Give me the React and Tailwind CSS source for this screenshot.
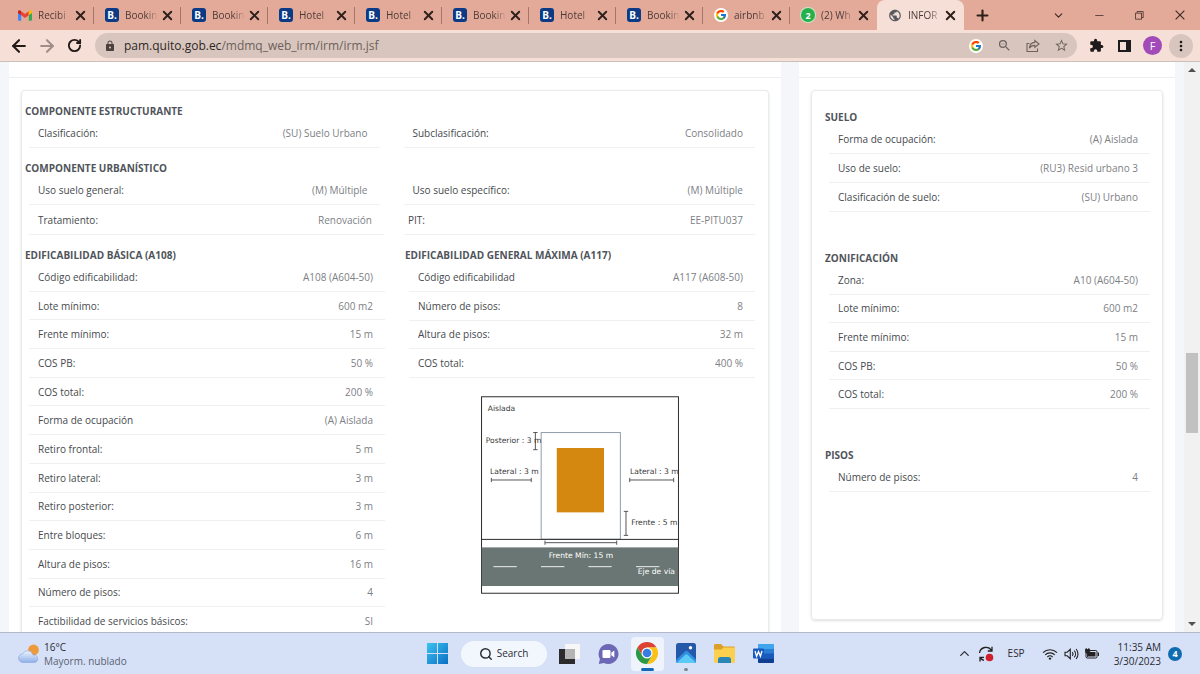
import React from 'react';
import { MdLock, MdZoomOut, MdStarBorder, MdExtension, MdMoreVert, MdPublic } from 'react-icons/md';
import { FcGoogle } from 'react-icons/fc';
import { VscChromeClose, VscChromeMinimize, VscChromeRestore } from 'react-icons/vsc';
import { ArrowLeft, ArrowRight, ChevronDown, ChevronUp, Plus, RotateCw, Search, X } from 'lucide-react';

/* ---------- Browser icons ---------- */

function GmailIcon() {
  return (
    <svg viewBox="0 0 24 18" className="h-[11px] w-[14px]" aria-hidden="true">
      <path d="M0 3v13.400C0 17.300.7 18 1.600 18H5.500V8z" fill="#4285f4" />
      <path d="M24 3v13.400c0 .9-.7 1.600-1.600 1.600H18.500V8z" fill="#34a853" />
      <path d="M5.500 1.700v6.800L12 13.400l6.500-4.900V1.700L12 6.600z" fill="#ea4335" />
      <path d="M0 2.500v2l5.500 4.100V1.700L4 .5C2.300-.7 0 .4 0 2.500z" fill="#c5221f" />
      <path d="M24 2.500v2l-5.500 4.100V1.700L20 .5c1.700-1.200 4-.1 4 2z" fill="#fbbc04" />
    </svg>
  );
}

function BookingIcon() {
  return (
    <span className="flex size-[14px] items-center justify-center rounded-[3px] bg-[#0b3b86] text-[10px] leading-none font-bold text-white">
      B.
    </span>
  );
}

function GoogleIcon() {
  return (
    <span className="flex size-[14px] items-center justify-center rounded-full bg-white">
      <FcGoogle className="size-[12px]" />
    </span>
  );
}

function WhatsAppIcon() {
  return (
    <span className="flex size-[14px] items-center justify-center rounded-full bg-[#25b04b] text-[9px] leading-none font-bold text-white ring-1 ring-[#c9e6c9]">
      2
    </span>
  );
}

function ShareIcon() {
  return (
    <svg viewBox="0 0 14 14" className="size-[14px]" fill="none" stroke="#6f635f" strokeWidth="1.100" aria-hidden="true">
      <path d="M3.500 4.500H1V12.500H11.500V9.500" />
      <path d="M8.800 1.500 13 5 8.800 8.300V6.400C6.200 6.400 4.500 7.300 3.300 9.300 3.600 6 5.300 3.700 8.800 3.400z" />
    </svg>
  );
}

function SidePanelIcon() {
  return (
    <svg viewBox="0 0 13 12" className="h-[12px] w-[13px]" aria-hidden="true">
      <rect x="1" y="1" width="11" height="10" fill="none" stroke="#1d1b1b" strokeWidth="2" />
      <rect x="8" y="1" width="4" height="10" fill="#1d1b1b" />
    </svg>
  );
}

/* ---------- Taskbar icons ---------- */

function WindowsIcon() {
  return (
    <svg viewBox="0 0 21 21" className="size-[21px]" aria-hidden="true">
      <defs>
        <linearGradient id="win" x1="0" y1="0" x2="1" y2="1">
          <stop offset="0" stopColor="#3cc3f0" />
          <stop offset="1" stopColor="#0a6fc4" />
        </linearGradient>
      </defs>
      <path d="M0 0h10v10H0zM11 0h10v10H11zM0 11h10v10H0zM11 11h10v10H11z" fill="url(#win)" />
    </svg>
  );
}

function TaskViewIcon() {
  return (
    <svg viewBox="0 0 21 20" className="h-[20px] w-[21px]" aria-hidden="true">
      <rect x="6" y="0" width="15" height="15" fill="#f7f7f7" />
      <rect x="0" y="5" width="16" height="15" fill="#2b2b2b" />
      <rect x="6" y="5" width="10" height="10" fill="#b4b4b4" />
    </svg>
  );
}

function ChatIcon() {
  return (
    <svg viewBox="0 0 21 20" className="h-[20px] w-[21px]" aria-hidden="true">
      <path d="M10.500 0a10 10 0 1 1-4.600 18.900L.8 20l1.100-5A10 10 0 0 1 10.500 0z" fill="#6c68b5" />
      <rect x="4.500" y="6" width="8" height="8" rx="1.300" fill="#fff" />
      <path d="M13.300 8.800 16.300 6.500v7L13.300 11.200z" fill="#fff" />
    </svg>
  );
}

function ChromeIcon() {
  return (
    <svg viewBox="0 0 48 48" className="size-[22px]" aria-hidden="true">
      <path d="M3.200 12A24 24 0 0 1 44.800 12H24L13.600 30z" fill="#dd4132" />
      <path d="M44.800 12A24 24 0 0 1 24 48L34.400 30 24 12z" fill="#fbc116" />
      <path d="M24 48A24 24 0 0 1 3.200 12L13.600 30H34.400z" fill="#2a9a48" />
      <circle cx="24" cy="24" r="12" fill="#fff" />
      <circle cx="24" cy="24" r="9.500" fill="#3a7de0" />
    </svg>
  );
}

function PhotosIcon() {
  return (
    <svg viewBox="0 0 20 20" className="size-[20px]" aria-hidden="true">
      <rect width="20" height="20" rx="2.500" fill="#2458a8" />
      <path d="M0 17 9 8.500c1-.9 2-.9 3 0l8 8V18a2 2 0 0 1-2 2H2a2 2 0 0 1-2-2z" fill="#2f8fe0" />
      <path d="M1 19.500 9 12c.9-.9 2-.9 2.900 0l7.600 7.300L18 20H2z" fill="#5cc9f7" />
      <circle cx="14.500" cy="4.800" r="1.700" fill="#fff" />
    </svg>
  );
}

function FolderIcon() {
  return (
    <svg viewBox="0 0 21 19" className="h-[19px] w-[21px]" aria-hidden="true">
      <path d="M0 1.500C0 .7.6 0 1.500 0H7l2.500 2.500H19.500c.8 0 1.500.7 1.500 1.500V8H0z" fill="#dca02a" />
      <path d="M0 5.500h7.500l2-2H21V17.500c0 .8-.7 1.500-1.500 1.500h-18C.7 19 0 18.300 0 17.500z" fill="#fbd04f" />
      <path d="M4 19v-3.500C4 14 5 13 6.500 13h8c1.500 0 2.500 1 2.500 2.500V19z" fill="#2b86b8" />
    </svg>
  );
}

function WordIcon() {
  return (
    <svg viewBox="0 0 21 19" className="h-[19px] w-[21px]" aria-hidden="true">
      <rect x="5" y="0" width="16" height="19" rx="1.500" fill="#2b7cd3" />
      <rect x="5" y="0" width="16" height="5" rx="1.500" fill="#41a5ee" />
      <rect x="5" y="9.500" width="16" height="5" fill="#185abd" />
      <path d="M5 14.500H21V17.500a1.500 1.500 0 0 1-1.500 1.500h-13A1.500 1.500 0 0 1 5 17.500z" fill="#103f91" />
      <rect x="0" y="4.500" width="11" height="10" rx="1" fill="#185abd" />
      <path d="M2 7 3.600 12.200 5.500 7.500 7.400 12.200 9 7" fill="none" stroke="#fff" strokeWidth="1.300" />
    </svg>
  );
}

function WeatherIcon() {
  return (
    <svg viewBox="0 0 22 19" className="h-[19px] w-[22px]" aria-hidden="true">
      <defs>
        <linearGradient id="cloud" x1="0" y1="0" x2="0" y2="1">
          <stop offset="0" stopColor="#eef4ff" />
          <stop offset="1" stopColor="#8fb0e8" />
        </linearGradient>
      </defs>
      <circle cx="15.500" cy="6" r="5.400" fill="#ee9a3c" />
      <path d="M5 18.500a4.300 4.300 0 0 1-.3-8.600A5.500 5.500 0 0 1 15 11a3.800 3.800 0 1 1 1.500 7.500z" fill="url(#cloud)" stroke="#86a5dc" strokeWidth=".6" />
    </svg>
  );
}

function SyncIcon() {
  return (
    <svg viewBox="0 0 16 16" className="size-[16px]" fill="none" stroke="#222" strokeWidth="1.300" aria-hidden="true">
      <path d="M1.500 7A6.500 6.500 0 0 1 13.500 4.500M14 .8V5H9.800" />
      <path d="M2 15.500V11.300H6M2.500 12A6.500 6.500 0 0 0 6 14.400" />
      <circle cx="11.500" cy="11.500" r="3.800" fill="#cf1f2b" stroke="none" />
    </svg>
  );
}

function WifiIcon() {
  return (
    <svg viewBox="0 0 16 12" className="h-[12px] w-[16px]" fill="none" stroke="#222" strokeWidth="1.200" aria-hidden="true">
      <path d="M1 4.600a10 10 0 0 1 14 0M3.200 6.900a6.800 6.800 0 0 1 9.600 0M5.400 9a3.700 3.700 0 0 1 5.200 0" />
      <circle cx="8" cy="10.600" r="1.200" fill="#222" stroke="none" />
    </svg>
  );
}

function VolumeIcon() {
  return (
    <svg viewBox="0 0 15 12" className="h-[12px] w-[15px]" fill="none" stroke="#222" strokeWidth="1.100" aria-hidden="true">
      <path d="M1 4.200H3.200L6.300 1.300V10.700L3.200 7.800H1z" />
      <path d="M8.300 4.200a2.800 2.800 0 0 1 0 3.600M10.200 2.600a5 5 0 0 1 0 6.800M12.100 1a7.500 7.500 0 0 1 0 10" />
    </svg>
  );
}

function BatteryIcon() {
  return (
    <svg viewBox="0 0 14 12" className="h-[12px] w-[14px]" aria-hidden="true">
      <rect x="1" y="2.500" width="11" height="7.500" rx="1.200" fill="none" stroke="#222" />
      <rect x="2.500" y="4" width="8" height="4.500" fill="#222" />
      <rect x="12.800" y="4.500" width="1.200" height="3.500" fill="#222" />
      <path d="M1.200 0v2M3.800 0v2M.3 1.500h4.400v2.200L2.500 6 .3 3.700zM2.500 6v3" fill="#222" stroke="#222" strokeWidth=".9" />
    </svg>
  );
}

/* ---------- Browser chrome ---------- */

const tabs = [
  { icon: GmailIcon, title: 'Recibi' },
  { icon: BookingIcon, title: 'Bookin' },
  { icon: BookingIcon, title: 'Bookin' },
  { icon: BookingIcon, title: 'Hotel' },
  { icon: BookingIcon, title: 'Hotel' },
  { icon: BookingIcon, title: 'Bookin' },
  { icon: BookingIcon, title: 'Hotel' },
  { icon: BookingIcon, title: 'Bookin' },
  { icon: GoogleIcon, title: 'airbnb' },
  { icon: WhatsAppIcon, title: '(2) Wh' },
];

function TabContent({ icon: Icon, title }) {
  return (
    <>
      <span className="flex w-[14px] shrink-0 justify-center">
        <Icon />
      </span>
      <span className="ml-[6px] w-[35px] text-[10px] whitespace-nowrap text-[#4c3a36] [mask-image:linear-gradient(to_right,black_60%,transparent_95%)]">
        {title}
      </span>
      <button type="button" aria-label={`Cerrar ${title}`} className="flex shrink-0 text-[#2d1f1c]">
        <X className="size-[15px]" strokeWidth={3} />
      </button>
    </>
  );
}

function GlobeIcon() {
  return <MdPublic className="size-[15px] text-[#55585c]" />;
}

function TabStrip() {
  return (
    <header className="flex h-[30px] shrink-0 items-center bg-[#e3aa99] pl-[7px]">
      <div className="flex h-full items-center">
        {tabs.map((tab, i) => (
          <div
            key={i}
            className={`flex h-[17px] w-[87px] items-center border-r pl-[11px] ${
              i === tabs.length - 1 ? 'border-transparent' : 'border-[#a5776a]'
            }`}
          >
            <TabContent {...tab} />
          </div>
        ))}
        <div className="flex h-full w-[87px] items-center self-end rounded-t-lg bg-[#f6dfd7] pl-[11px]">
          <TabContent icon={GlobeIcon} title="INFOR" />
        </div>
      </div>
      <button type="button" aria-label="Nueva pestaña" className="ml-[10px] flex text-[#2d1f1c]">
        <Plus className="size-[17px]" strokeWidth={3} />
      </button>
      <div className="ml-auto flex items-center gap-7 pr-[13px] text-[#3a2723]">
        <button type="button" aria-label="Buscar pestañas">
          <ChevronDown className="size-[13px]" strokeWidth={2} />
        </button>
        <button type="button" aria-label="Minimizar">
          <VscChromeMinimize className="size-3" />
        </button>
        <button type="button" aria-label="Restaurar">
          <VscChromeRestore className="size-3" />
        </button>
        <button type="button" aria-label="Cerrar">
          <VscChromeClose className="size-[14px]" />
        </button>
      </div>
    </header>
  );
}

function Toolbar() {
  return (
    <div className="flex h-8 shrink-0 items-center border-b border-[#cdbfba] bg-[#f6dfd7] pl-[9px] pr-[7px]">
      <div className="flex items-center gap-2 text-[#231a18]">
        <button type="button" aria-label="Atrás">
          <ArrowLeft className="size-5" strokeWidth={2.5} />
        </button>
        <button type="button" aria-label="Adelante" className="text-[#a08d87]">
          <ArrowRight className="size-5" strokeWidth={2.5} />
        </button>
        <button type="button" aria-label="Recargar" className="ml-[2px]">
          <RotateCw className="size-[15px]" strokeWidth={3} />
        </button>
      </div>
      <div className="ml-[13px] flex h-[25px] flex-1 items-center rounded-full bg-[#d8c6be] pr-2 pl-[9px]">
        <MdLock className="size-3 text-[#4c403d]" />
        <p className="ml-2 flex-1 text-[12px] text-[#6d5f5a]">
          <span className="text-[#2f2725]">pam.quito.gob.ec</span>/mdmq_web_irm/irm/irm.jsf
        </p>
        <div className="flex items-center gap-[14px] text-[#6f635f]">
          <button type="button" aria-label="Google">
            <GoogleIcon />
          </button>
          <button type="button" aria-label="Reducir zoom">
            <MdZoomOut className="size-[15px]" />
          </button>
          <button type="button" aria-label="Compartir">
            <ShareIcon />
          </button>
          <button type="button" aria-label="Agregar a favoritos">
            <MdStarBorder className="size-[15px]" />
          </button>
        </div>
      </div>
      <div className="ml-3 flex items-center text-[#1d1b1b]">
        <button type="button" aria-label="Extensiones">
          <MdExtension className="size-[15px]" />
        </button>
        <button type="button" aria-label="Panel lateral" className="ml-[14px]">
          <SidePanelIcon />
        </button>
        <button
          type="button"
          aria-label="Perfil"
          className="ml-3 flex size-[19px] items-center justify-center rounded-full bg-[#a14ab8] text-[11px] leading-none text-white"
        >
          F
        </button>
        <button
          type="button"
          aria-label="Menú"
          className="ml-[7px] flex size-6 items-center justify-center rounded-full bg-[#d8c6be]"
        >
          <MdMoreVert className="size-4" />
        </button>
      </div>
    </div>
  );
}

/* ---------- Page content ---------- */

const basica = [
  ['Código edificabilidad:', 'A108 (A604-50)'],
  ['Lote mínimo:', '600 m2'],
  ['Frente mínimo:', '15 m'],
  ['COS PB:', '50 %'],
  ['COS total:', '200 %'],
  ['Forma de ocupación', '(A) Aislada'],
  ['Retiro frontal:', '5 m'],
  ['Retiro lateral:', '3 m'],
  ['Retiro posterior:', '3 m'],
  ['Entre bloques:', '6 m'],
  ['Altura de pisos:', '16 m'],
  ['Número de pisos:', '4'],
  ['Factibilidad de servicios básicos:', 'SI'],
];

const maxima = [
  ['Código edificabilidad', 'A117 (A608-50)'],
  ['Número de pisos:', '8'],
  ['Altura de pisos:', '32 m'],
  ['COS total:', '400 %'],
];

const suelo = [
  ['Forma de ocupación:', '(A) Aislada'],
  ['Uso de suelo:', '(RU3) Resid urbano 3'],
  ['Clasificación de suelo:', '(SU) Urbano'],
];

const zonificacion = [
  ['Zona:', 'A10 (A604-50)'],
  ['Lote mínimo:', '600 m2'],
  ['Frente mínimo:', '15 m'],
  ['COS PB:', '50 %'],
  ['COS total:', '200 %'],
];

function Heading({ children, className = 'pt-3' }) {
  return <h2 className={`${className} text-[10px] leading-4 font-bold text-[#50545a]`}>{children}</h2>;
}

function Field({ label, value, className = 'pl-[9px] pr-3' }) {
  return (
    <div className={`flex min-h-7 items-center justify-between border-b border-[#f0f0f2] leading-4 ${className}`}>
      <dt className="text-[#46494e]">{label}</dt>
      <dd className="text-[#7d8085]">{value}</dd>
    </div>
  );
}

function SetbackDiagram() {
  return (
    <svg
      viewBox="0 0 260 260"
      className="mx-auto mt-[18px] size-[198px]"
      role="img"
      aria-label="Esquema de retiros"
      fontFamily="DejaVu Sans, sans-serif"
      fontSize="10"
      fill="#3a3a3a"
    >
      <rect x="0.700" y="1" width="258.600" height="258" fill="#fff" stroke="#2b2b2b" strokeWidth="1.300" />
      <rect x="79" y="48" width="104" height="140" fill="none" stroke="#8f9cab" strokeWidth="1.300" />
      <rect x="99.500" y="68.300" width="62" height="84.500" fill="#d4880f" />
      <path d="M0 188.300H260" stroke="#2b2b2b" strokeWidth="1.300" />
      <rect x="1" y="198.800" width="258" height="50.700" fill="#6a7673" />
      <g fill="none" stroke="#555" strokeWidth="1.300">
        <path d="M71.400 48V70.500M68.500 48h5.800M68.500 70.500h5.800" />
        <path d="M13.600 110.300H66M13.600 107.500v5.600M66 107.500v5.600" />
        <path d="M195.300 110.300H253M195.300 107.500v5.600M253 107.500v5.600" />
        <path d="M190.400 151.500V183M187.500 151.500h5.800M187.500 183h5.800" />
        <path d="M84 192.600H178.200M84 189.800v5.600M178.200 189.800v5.600" />
      </g>
      <path
        d="M16.200 224.100H47M78.800 224.100H109.500M141 224.100H171.600M203.600 224.100H234.200"
        stroke="#eef0ef"
        strokeWidth="1.300"
      />
      <text x="8.800" y="19.500">Aislada</text>
      <text x="6.200" y="62">Posterior : 3 m</text>
      <text x="11.900" y="102.500">Lateral : 3 m</text>
      <text x="195.700" y="102.500">Lateral : 3 m</text>
      <text x="197.400" y="169.400">Frente : 5 m</text>
      <text x="88.900" y="213" fill="#fff">Frente Mín: 15 m</text>
      <text x="205.800" y="234.200" fill="#fff">Eje de vía</text>
    </svg>
  );
}

function Report() {
  return (
    <main className="flex flex-col overflow-hidden bg-white">
      <div className="h-4 shrink-0 border-b border-[#eceef1]" />
      <section className="mx-3 mt-3 flex-1 rounded-t border border-b-0 border-[#e9eaec] px-[3px] pt-3 shadow-sm">
        <div className="pr-[10px]">
          <Heading className="">COMPONENTE ESTRUCTURANTE</Heading>
          <dl className="grid auto-rows-[29px] grid-cols-[351fr_352fr] gap-x-6 pl-1">
            <Field label="Clasificación:" value="(SU) Suelo Urbano" />
            <Field label="Subclasificación:" value="Consolidado" />
          </dl>
          <Heading>COMPONENTE URBANÍSTICO</Heading>
          <dl className="grid auto-rows-[29px] grid-cols-[351fr_352fr] gap-x-6 pl-1">
            <Field label="Uso suelo general:" value="(M) Múltiple" />
            <Field label="Uso suelo específico:" value="(M) Múltiple" />
          </dl>
          <dl className="grid auto-rows-[30px] grid-cols-[356fr_352fr] gap-x-5 pl-1">
            <Field label="Tratamiento:" value="Renovación" />
            <Field label="PIT:" value="EE-PITU037" className="pl-1 pr-3" />
          </dl>
          <div className="grid grid-cols-[361fr_351fr] gap-x-5">
            <div>
              <Heading>EDIFICABILIDAD BÁSICA (A108)</Heading>
              <dl className="grid min-h-[373px] auto-rows-fr pl-1">
                {basica.map(([label, value]) => (
                  <Field key={label} label={label} value={value} />
                ))}
              </dl>
            </div>
            <div>
              <Heading>EDIFICABILIDAD GENERAL MÁXIMA (A117)</Heading>
              <dl className="grid min-h-[115px] auto-rows-fr pl-1">
                {maxima.map(([label, value]) => (
                  <Field key={label} label={label} value={value} />
                ))}
              </dl>
              <SetbackDiagram />
            </div>
          </div>
        </div>
      </section>
    </main>
  );
}

function Summary() {
  return (
    <aside className="flex flex-col overflow-hidden bg-white">
      <div className="h-4 shrink-0 border-b border-[#eceef1]" />
      <section className="mx-3 mt-3 mb-3 flex-1 rounded border border-[#e9eaec] pt-[18px] pr-3 pl-[13px] shadow-sm">
        <Heading className="">SUELO</Heading>
        <dl className="grid auto-rows-[29px] pl-1">
          {suelo.map(([label, value]) => (
            <Field key={label} label={label} value={value} />
          ))}
        </dl>
        <Heading className="pt-[38px]">ZONIFICACIÓN</Heading>
        <dl className="grid min-h-[143px] auto-rows-fr pl-1">
          {zonificacion.map(([label, value]) => (
            <Field key={label} label={label} value={value} />
          ))}
        </dl>
        <Heading className="pt-[38px]">PISOS</Heading>
        <dl className="grid auto-rows-[29px] pl-1">
          <Field label="Número de pisos:" value="4" />
        </dl>
      </section>
    </aside>
  );
}

function Scrollbar() {
  return (
    <div className="flex w-4 shrink-0 flex-col items-center bg-[#f1f1f1] py-[6px]" aria-hidden="true">
      <span className="border-x-4 border-b-4 border-x-transparent border-b-[#505050]" />
      <span className="grow-[280]" />
      <span className="h-20 w-3 bg-[#c1c1c1]" />
      <span className="grow-[188]" />
      <span className="border-x-4 border-t-4 border-x-transparent border-t-[#505050]" />
    </div>
  );
}

/* ---------- Taskbar ---------- */

function Taskbar() {
  return (
    <footer className="grid h-[42px] shrink-0 grid-cols-[1fr_auto_1fr] items-center border-t border-[#b4b9c9] bg-[#d6e0f7] px-[18px] text-[10px] text-[#2a2d33]">
      <button type="button" className="flex items-center gap-1 text-left leading-[14px]">
        <WeatherIcon />
        <span className="flex flex-col">
          <span>16°C</span>
          <span className="text-[#5b6270]">Mayorm. nublado</span>
        </span>
      </button>
      <nav className="flex items-center" aria-label="Aplicaciones">
        <button type="button" aria-label="Inicio">
          <WindowsIcon />
        </button>
        <button
          type="button"
          className="ml-[13px] flex h-[26px] w-[86px] items-center justify-center gap-1 rounded-full bg-[#f2f6fd]"
        >
          <Search className="size-[14px]" strokeWidth={2.5} />
          Search
        </button>
        <button type="button" aria-label="Vista de tareas" className="ml-3">
          <TaskViewIcon />
        </button>
        <button type="button" aria-label="Chat" className="ml-[18px]">
          <ChatIcon />
        </button>
        <button
          type="button"
          aria-label="Chrome"
          className="ml-3 flex h-[34px] w-[33px] flex-col items-center justify-end gap-1 rounded bg-[#eff3fc]"
        >
          <ChromeIcon />
          <span className="h-[3px] w-[13px] rounded-full bg-[#1667b5]" />
        </button>
        <button
          type="button"
          aria-label="Fotos"
          className="ml-3 flex h-[34px] flex-col items-center justify-end gap-[5px]"
        >
          <PhotosIcon />
          <span className="h-[3px] w-1 rounded-full bg-[#808591]" />
        </button>
        <button type="button" aria-label="Explorador de archivos" className="ml-[18px]">
          <FolderIcon />
        </button>
        <button type="button" aria-label="Word" className="ml-[18px]">
          <WordIcon />
        </button>
      </nav>
      <div className="flex items-center justify-end">
        <button type="button" aria-label="Mostrar iconos ocultos">
          <ChevronUp className="size-[15px]" />
        </button>
        <span className="ml-[6px]">
          <SyncIcon />
        </span>
        <span className="ml-[14px]">ESP</span>
        <span className="ml-[17px] flex items-center gap-[6px]">
          <WifiIcon />
          <VolumeIcon />
          <BatteryIcon />
        </span>
        <span className="ml-[15px] flex flex-col text-right leading-[14px]">
          <span>11:35 AM</span>
          <span>3/30/2023</span>
        </span>
        <span className="ml-[7px] flex size-[14px] items-center justify-center rounded-full bg-[#0f6cb0] text-[9px] leading-none font-bold text-white">
          4
        </span>
      </div>
    </footer>
  );
}

export default function App() {
  return (
    <div className="flex h-screen flex-col overflow-hidden font-['Open_Sans','Noto_Sans',sans-serif]">
      <TabStrip />
      <Toolbar />
      <div className="flex min-h-0 flex-1">
        <div className="grid min-w-0 flex-1 grid-cols-[772fr_376fr] gap-x-[18px] overflow-hidden bg-[#f5f6f9] px-[9px] text-[10px]">
          <Report />
          <Summary />
        </div>
        <Scrollbar />
      </div>
      <Taskbar />
    </div>
  );
}
